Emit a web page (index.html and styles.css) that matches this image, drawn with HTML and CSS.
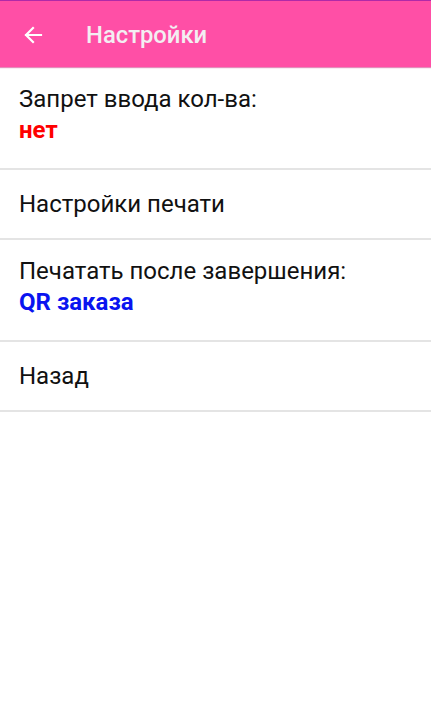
FILE: index.html
```html
<!DOCTYPE html>
<html lang="ru">
<head>
<meta charset="utf-8">
<title>Настройки</title>
<link rel="stylesheet" href="styles.css">
</head>
<body>
<div class="app">
  <header class="toolbar">
    <button class="back" aria-label="Назад">
      <svg width="20" height="20" viewBox="0 0 20 20" aria-hidden="true">
        <path d="M18 10H3M10 3L3 10l7 7" fill="none" stroke="#ffffff" stroke-width="2.2" stroke-linecap="square"/>
      </svg>
    </button>
    <h1 class="title">Настройки</h1>
  </header>
  <ul class="list">
    <li class="item two">
      <span class="label">Запрет ввода кол-ва:</span>
      <span class="value red">нет</span>
    </li>
    <li class="item one">
      <span class="label">Настройки печати</span>
    </li>
    <li class="item two">
      <span class="label">Печатать после завершения:</span>
      <span class="value blue">QR заказа</span>
    </li>
    <li class="item one">
      <span class="label">Назад</span>
    </li>
  </ul>
</div>
</body>
</html>
```

FILE: styles.css
```css
html, body {
  margin: 0;
  padding: 0;
  background: #ffffff;
}
body {
  font-family: Roboto, "Noto Sans", "Liberation Sans", sans-serif;
  width: 431px;
  height: 717px;
  overflow: hidden;
}
.app {
  display: flex;
  flex-direction: column;
}
.toolbar {
  height: 66px;
  border-top: 1px solid #b02aa8;
  background: #ff4fa6;
  display: flex;
  align-items: center;
  box-shadow: 0 1px 1px rgba(200, 30, 120, 0.5);
}
.back {
  width: 20px;
  height: 20px;
  margin-left: 23px;
  margin-top: 1px;
  padding: 0;
  border: 0;
  background: transparent;
  display: flex;
}
.title {
  margin: 2px 0 0 43px;
  font-size: 23.8px;
  font-weight: 500;
  color: #f3eef2;
}
.list {
  list-style: none;
  margin: 1px 0 0 0;
  padding: 0;
}
.item {
  display: flex;
  flex-direction: column;
  justify-content: center;
  padding: 0 19px;
  border-bottom: 2px solid #e4e4e4;
  font-size: 24px;
  color: #111111;
}
.item.two {
  height: 94px;
  padding-bottom: 6px;
}
.item.one {
  height: 68px;
}
.label {
  line-height: 31px;
}
.value {
  font-weight: 700;
  line-height: 31px;
}
.red { color: #ff0000; }
.blue { color: #0a14f0; }
```
